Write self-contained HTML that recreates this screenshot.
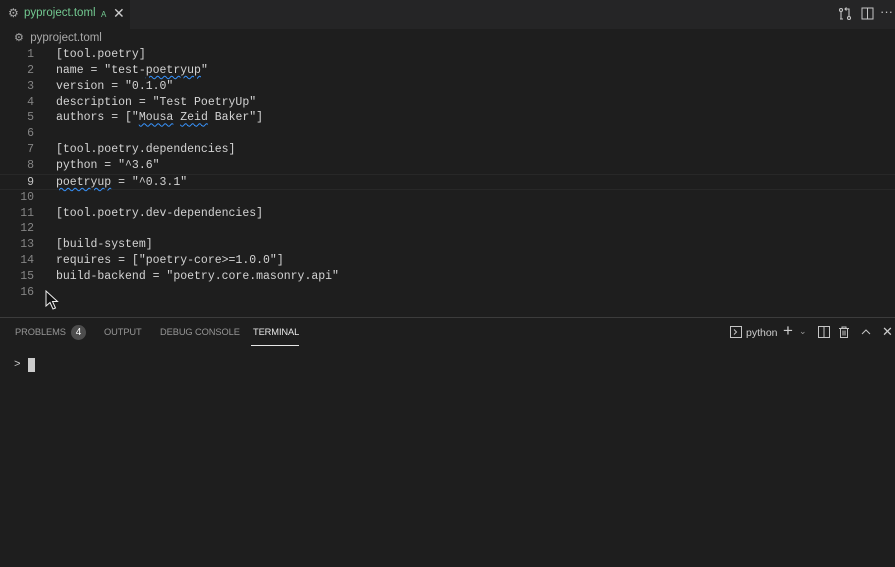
<!DOCTYPE html>
<html><head><style>
body{margin:0;width:895px;height:566px;background:#1e1e1e;overflow:hidden;font-family:"Liberation Sans",sans-serif;position:relative}
.tabs{position:absolute;top:0;left:0;width:895px;height:29px;background:#252526}
.tab{position:absolute;left:0;top:0;width:130px;height:29px;background:#1e1e1e;color:#73c991;font-size:11.5px}
.bc{position:absolute;top:31px;left:14px;color:#a9a9a9;font-size:11.5px}
.ed{position:absolute;top:47px;left:0;width:895px;font-family:"Liberation Mono",monospace;font-size:11.5px}
.l{height:15.87px;line-height:15.87px;position:relative;white-space:pre;color:#d4d4d4}
.n{position:absolute;left:0;width:34px;text-align:right;color:#858585}
.c{position:absolute;left:56px}
.cur{border-top:1px solid #282828;border-bottom:1px solid #282828;box-sizing:border-box}
.sq{text-decoration:underline wavy #3794ff;text-decoration-thickness:1px;text-underline-offset:2px}
.panel{position:absolute;top:317px;left:0;width:895px;height:249px;border-top:1px solid #3c3c3c;background:#1e1e1e}
.pt{position:absolute;top:9px;font-size:9.3px;color:#969696;letter-spacing:-0.1px}
</style></head><body>
<div class="tabs">
 <div class="tab">
  <span style="position:absolute;left:8px;top:6px;color:#a9a9a9;font-size:12px">⚙</span>
  <span style="position:absolute;left:24px;top:7px">pyproject.toml</span>
  <span style="position:absolute;left:101px;top:10px;font-size:8px">A</span>
  <span style="position:absolute;left:113px;top:5px;color:#ccc;font-size:14px">✕</span>
 </div>
 <svg style="position:absolute;left:838px;top:7px" width="14" height="14" viewBox="0 0 14 14" fill="none" stroke="#c5c5c5" stroke-width="1.1"><circle cx="3" cy="3" r="1.5"/><circle cx="11" cy="11" r="1.5"/><path d="M3 4.5V12M11 9.5V2H7M8.5 0.5L7 2L8.5 3.5M5 12H2"/></svg>
 <svg style="position:absolute;left:861px;top:7px" width="13" height="13" viewBox="0 0 13 13" fill="none" stroke="#c5c5c5"><rect x="1" y="1" width="11" height="11"/><path d="M6.5 1v11"/></svg>
 <span style="position:absolute;left:880px;top:4px;color:#c5c5c5;font-size:13px">···</span>
</div>
<div class="bc"><span style="font-size:11px">⚙</span>&nbsp; pyproject.toml</div>
<div class="ed">
<div class="l"><span class="n">1</span><span class="c">[tool.poetry]</span></div>
<div class="l"><span class="n">2</span><span class="c">name = "test-<span class="sq">poetryup</span>"</span></div>
<div class="l"><span class="n">3</span><span class="c">version = "0.1.0"</span></div>
<div class="l"><span class="n">4</span><span class="c">description = "Test PoetryUp"</span></div>
<div class="l"><span class="n">5</span><span class="c">authors = ["<span class="sq">Mousa</span> <span class="sq">Zeid</span> Baker"]</span></div>
<div class="l"><span class="n">6</span></div>
<div class="l"><span class="n">7</span><span class="c">[tool.poetry.dependencies]</span></div>
<div class="l"><span class="n">8</span><span class="c">python = "^3.6"</span></div>
<div class="l cur"><span class="n" style="color:#c6c6c6">9</span><span class="c"><span class="sq">poetryup</span> = "^0.3.1"</span></div>
<div class="l"><span class="n">10</span></div>
<div class="l"><span class="n">11</span><span class="c">[tool.poetry.dev-dependencies]</span></div>
<div class="l"><span class="n">12</span></div>
<div class="l"><span class="n">13</span><span class="c">[build-system]</span></div>
<div class="l"><span class="n">14</span><span class="c">requires = ["poetry-core&gt;=1.0.0"]</span></div>
<div class="l"><span class="n">15</span><span class="c">build-backend = "poetry.core.masonry.api"</span></div>
<div class="l"><span class="n">16</span></div>
</div>
<svg style="position:absolute;left:45px;top:290px" width="14" height="20" viewBox="0 0 14 20"><path d="M1 1V16L5 12.5L8 19L10.5 18L7.5 11.5H12.5Z" fill="#111" stroke="#eee" stroke-width="1"/></svg>
<div class="panel">
 <span class="pt" style="left:15px">PROBLEMS</span>
 <span style="position:absolute;left:71px;top:7px;width:15px;height:15px;border-radius:8px;background:#4d4d4d;color:#fff;font-size:10px;text-align:center;line-height:15px">4</span>
 <span class="pt" style="left:104px">OUTPUT</span>
 <span class="pt" style="left:160px">DEBUG CONSOLE</span>
 <span class="pt" style="left:253px;color:#e7e7e7">TERMINAL</span>
 <div style="position:absolute;left:251px;top:27px;width:48px;height:1px;background:#e7e7e7"></div>
 <svg style="position:absolute;left:730px;top:8px" width="12" height="12" viewBox="0 0 12 12" fill="none" stroke="#c5c5c5"><rect x="0.5" y="0.5" width="11" height="11"/><path d="M4 3.5L6.5 6L4 8.5"/></svg>
 <span style="position:absolute;left:746px;top:9px;color:#ccc;font-size:10.5px">python</span>
 <span style="position:absolute;left:783px;top:3px;color:#ccc;font-size:17px">+</span>
 <span style="position:absolute;left:799px;top:8px;color:#999;font-size:9px">⌄</span>
 <svg style="position:absolute;left:818px;top:8px" width="12" height="12" viewBox="0 0 12 12" fill="none" stroke="#c5c5c5"><rect x="0.5" y="0.5" width="11" height="11"/><path d="M6 0.5v11"/></svg>
 <svg style="position:absolute;left:838px;top:8px" width="12" height="12" viewBox="0 0 12 12" fill="none" stroke="#c5c5c5"><path d="M1 2.5h10M4 2.5V1h4v1.5M2.5 2.5v9h7v-9M5 4.5v5M7 4.5v5"/></svg>
 <svg style="position:absolute;left:861px;top:10px" width="10" height="7" viewBox="0 0 10 7" fill="none" stroke="#c5c5c5"><path d="M1 6L5 2L9 6"/></svg>
 <span style="position:absolute;left:882px;top:6px;color:#ccc;font-size:13px">✕</span>
 <span style="position:absolute;left:14px;top:41px;color:#ccc;font-size:11px;font-family:'Liberation Mono',monospace">&gt;</span>
 <div style="position:absolute;left:28px;top:40px;width:7px;height:14px;background:#ccc"></div>
</div>
</body></html>
